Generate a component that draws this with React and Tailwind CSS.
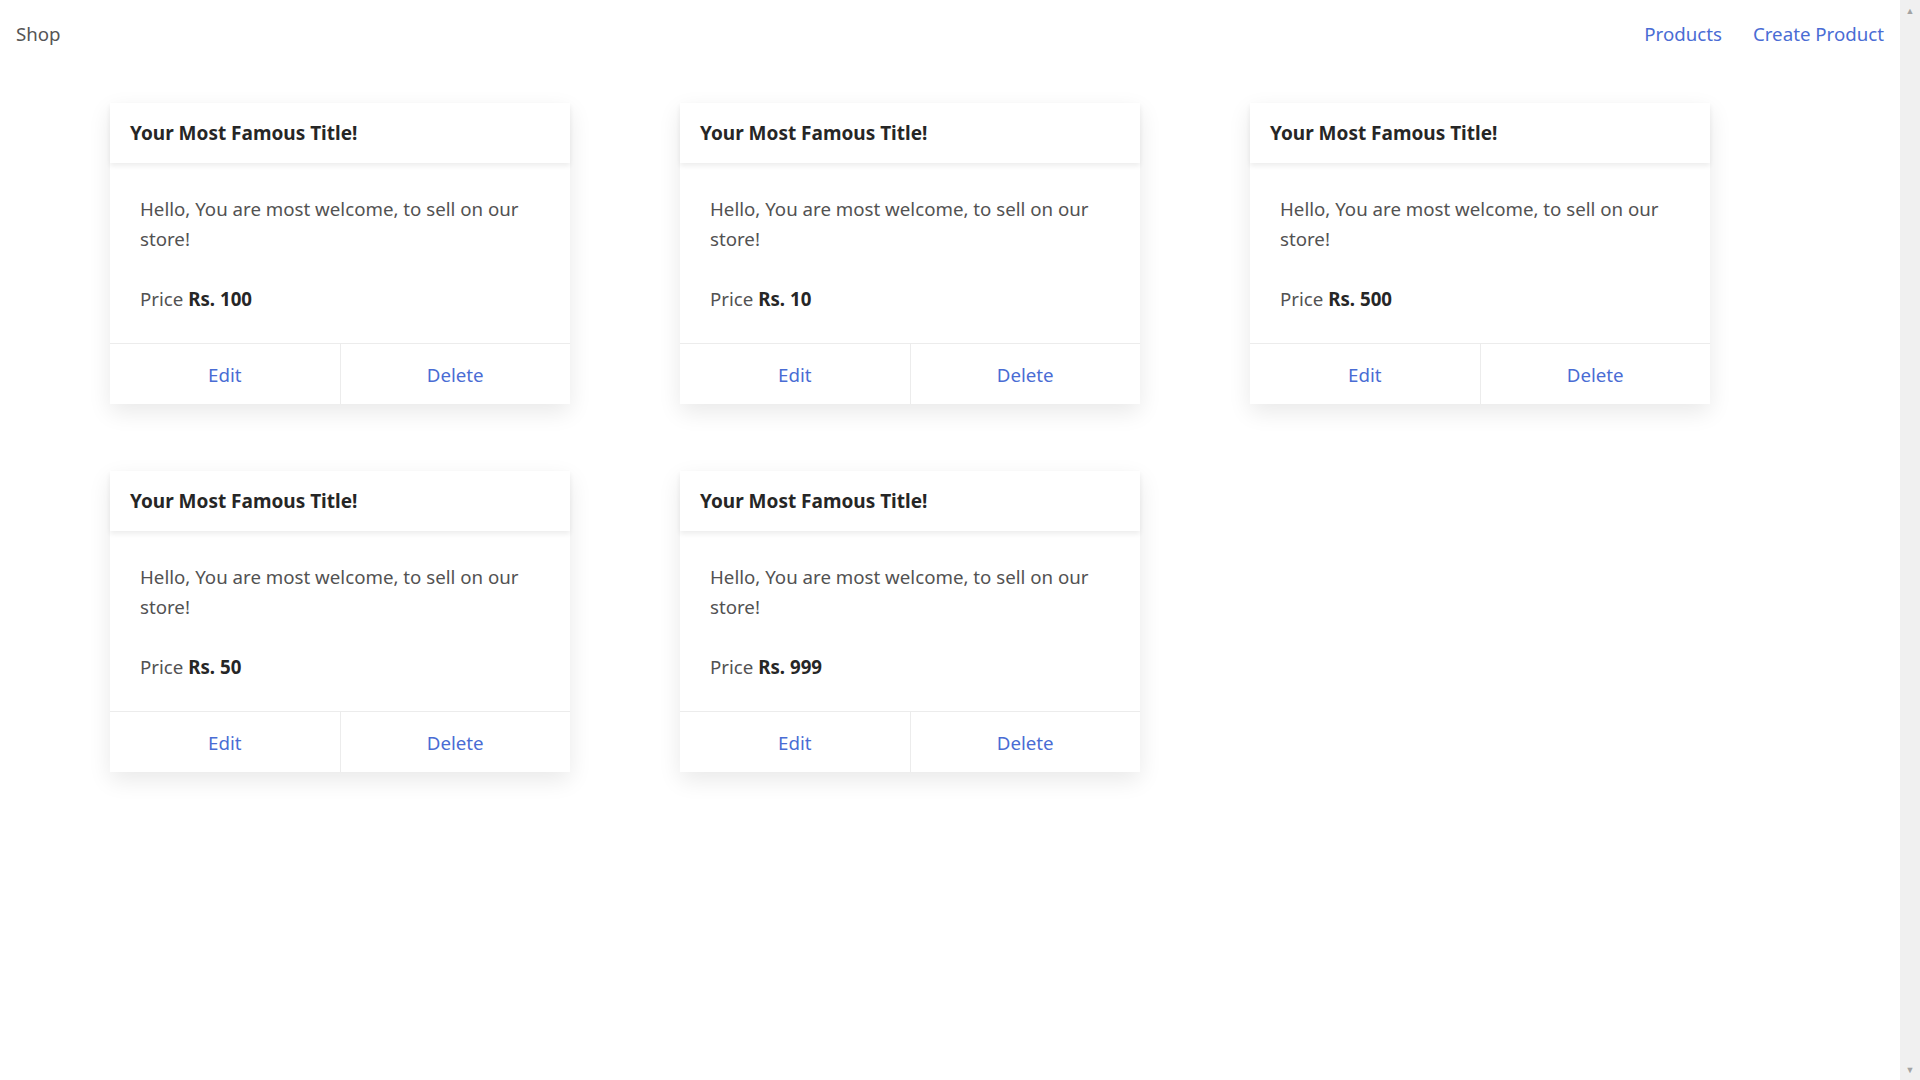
const products = [
  { id: 1, title: 'Your Most Famous Title!', price: 100 },
  { id: 2, title: 'Your Most Famous Title!', price: 10 },
  { id: 3, title: 'Your Most Famous Title!', price: 500 },
  { id: 4, title: 'Your Most Famous Title!', price: 50 },
  { id: 5, title: 'Your Most Famous Title!', price: 999 },
];

function ProductCard({ product }) {
  return (
    <div className="w-[460px] bg-white shadow-[0_8px_22px_rgba(0,0,0,0.09)]">
      <div className="h-[60px] flex items-center px-5 shadow-[0_3px_5px_rgba(0,0,0,0.07)] relative">
        <h1 className="text-[19px] font-bold text-[#262626]">{product.title}</h1>
      </div>
      <div className="px-[30px] pt-[31px] pb-[29px] text-[18.7px] leading-[30px] text-[#525252]">
        <p>Hello, You are most welcome, to sell on our store!</p>
        <p className="mt-[30px]">
          Price <span className="font-bold text-[#262626]">Rs. {product.price}</span>
        </p>
      </div>
      <div className="h-[61px] flex border-t border-[#ececec] text-[18.7px] text-[#4a6cd4]">
        <button className="flex-1 pt-[2px] border-r border-[#ececec]">Edit</button>
        <button className="flex-1 pt-[2px]">Delete</button>
      </div>
    </div>
  );
}

export default function App() {
  return (
    <div className="flex min-h-screen bg-white font-['Noto_Sans',sans-serif]">
      <div className="flex-1">
        <nav className="h-[68px] flex items-center justify-between px-4 text-[18.7px]">
          <a href="#" className="text-[#555]">Shop</a>
          <div className="flex items-center gap-[31px]">
            <a href="#" className="text-[#4a6cd4]">Products</a>
            <a href="#" className="text-[#4a6cd4]">Create Product</a>
          </div>
        </nav>
        <main className="pl-[110px] pt-[35px] flex flex-wrap gap-x-[110px] gap-y-[67px] max-w-[1720px]">
          {products.map((p) => (
            <ProductCard key={p.id} product={p} />
          ))}
        </main>
      </div>
      <div className="w-[20px] h-screen bg-[#f0f0f0] flex flex-col items-center justify-between py-1 text-[9px] text-[#a3a3a3]">
        <span>▲</span>
        <span>▼</span>
      </div>
    </div>
  );
}
